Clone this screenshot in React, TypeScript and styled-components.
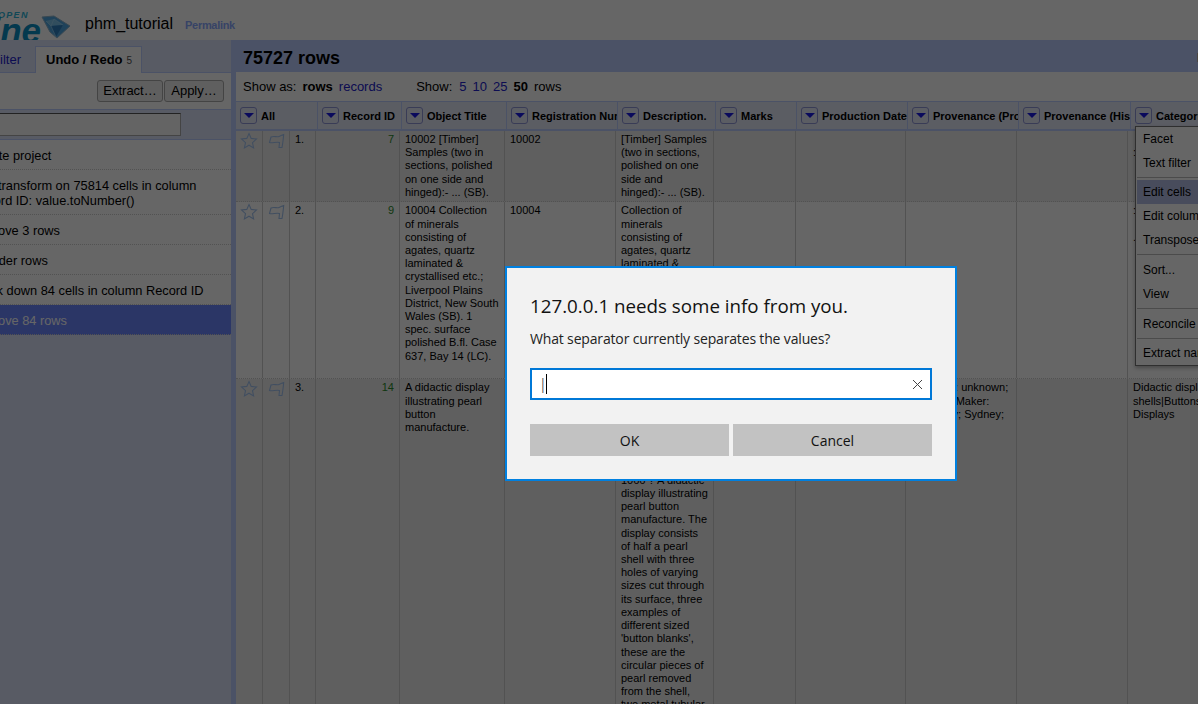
import React from "react";
import styled, { createGlobalStyle } from "styled-components";

const Global = createGlobalStyle`
  html, body { margin: 0; padding: 0; background: #fff; }
  body { font-family: "Liberation Sans", Arial, sans-serif; color: #000; }
  * { box-sizing: border-box; }
`;

const Page = styled.div`
  position: relative; width: 1198px; height: 704px; overflow: hidden;
  display: flex; flex-direction: column; background: #fff;
`;
const Header = styled.header`
  height: 40px; flex: none; display: flex; align-items: flex-start;
`;
const Logo = styled.div`display: flex; align-items: flex-start; width: 85px; flex: none;`;
const LogoWords = styled.div`
  width: 41px; height: 40px; overflow: hidden; display: flex; flex-direction: column;
  font-style: italic; font-weight: bold;
`;
const LogoOpen = styled.div`
  font-size: 9px; line-height: 8px; letter-spacing: 1.3px; color: #2fb4d8; margin: 11px 0 0 -2px;
`;
const LogoName = styled.div`
  display: flex; justify-content: flex-end; font-size: 35px; line-height: 24px; height: 24px; color: #0a8fc4; white-space: nowrap;
`;
const Diamond = styled.svg`margin: 15px 0 0 0; flex: none;`;
const ProjectName = styled.div`font-size: 16px; line-height: 20px; margin-top: 14px;`;
const Permalink = styled.a`font-size: 11px; font-weight: bold; letter-spacing: -0.3px; color: #8aa8ff; line-height: 14px; margin: 18px 0 0 12px;`;

const Main = styled.div`flex: 1; display: flex; min-height: 0;`;
const Left = styled.aside`
  width: 231px; flex: none; background: #dde3fb; display: flex; flex-direction: column; overflow: hidden;
`;
const TabBar = styled.div`
  height: 33px; flex: none; display: flex; align-items: flex-end; padding-top: 6px; border-bottom: 1px solid #bcf;
`;
const TabGhost = styled.div`
  width: 35px; flex: none; height: 26px; display: flex; justify-content: flex-end; align-items: center;
  padding-right: 14px; font-size: 13px; color: #2222cc; white-space: nowrap;
`;
const Tab = styled.div`
  width: 107px; height: 27px; background: #fff; border: 1px solid #bcf; border-bottom: none;
  margin-bottom: -1px; padding-left: 10px; font-size: 13px; font-weight: bold; line-height: 25px; white-space: nowrap;
`;
const TabCount = styled.span`font-size: 10px; font-weight: normal; color: #555; margin-left: 4px;`;
const Tools = styled.div`
  height: 36px; flex: none; background: #fff; display: flex; justify-content: flex-end; padding: 7px 7px 0 0;
`;
const ToolButton = styled.div<{ $w: number }>`
  width: ${(p) => p.$w}px; height: 22px; background: #eee; border: 1px solid #aaa; font-size: 13px;
  line-height: 20px; text-align: center; border-radius: 3px; color: #000;
  & + & { margin-left: 1px; }
`;
const SearchBand = styled.div`
  height: 31px; flex: none; background: #dde3fb; border-top: 1px solid #bcf; border-bottom: 1px solid #bcf;
  padding-top: 3px;
`;
const SearchInput = styled.div`
  width: 182px; height: 23px; margin-left: -1px; background: #fafafa; border: 1px solid #aaa;
  border-top-color: #555; border-left-color: #555;
`;
const History = styled.div`background: #fff; display: flex; flex-direction: column;`;
const HistoryRow = styled.div<{ $on?: boolean }>`
  padding: 7.5px 10px 6.5px 0; font-size: 12.8px; line-height: 15px; border-bottom: 1px dotted #ccc;
  background: ${(p) => (p.$on ? "#6c88ff" : "transparent")};
  color: ${(p) => (p.$on ? "#fff" : "#000")};
`;
const HistoryText = styled.div`margin-left: -29px; width: 245px;`;

const Right = styled.section`
  flex: 1; min-width: 0; display: flex; flex-direction: column; background: #bcf; overflow: hidden;
`;
const TitleBand = styled.div`
  height: 32px; flex: none; padding-left: 12px; display: flex; justify-content: space-between;
  font-size: 18px; font-weight: bold; line-height: 36px; white-space: nowrap;
`;
const EdgeMark = styled.span`width: 1px; overflow: hidden; font-size: 12px; font-weight: normal;`;
const Data = styled.div`
  flex: 1; margin-left: 5px; background: #fff; display: flex; flex-direction: column; min-height: 0;
`;
const Controls = styled.div`
  height: 29px; flex: none; display: flex; align-items: center; gap: 6px; padding-left: 7px; font-size: 13px;
`;
const Strong = styled.b``;
const Link = styled.a`color: #2222cc;`;
const GroupGap = styled.span`width: 22px;`;
const ControlLabel = styled.span``;
const CountLabel = styled.span`margin-right: 1px;`;

const HEAD = "82px 84px 105px 111px 98px 81px 111px 111px 112px 200px";
const COLS = "27px 27px 26px 84px 105px 111px 98px 82px 110px 111px 111px 200px";

const HeadRow = styled.div`
  display: grid; grid-template-columns: ${HEAD}; height: 30px; flex: none; background: #e4e8f8;
  border-top: 1px solid #bcf; border-bottom: 2px solid #bcf;
`;
const HeadCell = styled.div`
  display: flex; align-items: center; gap: 4px; padding-left: 4px; border-right: 1px solid #bcf;
  font-size: 11px; font-weight: bold; white-space: nowrap; overflow: hidden;
`;
const Drop = styled.span`
  width: 17px; height: 17px; flex: none; border: 1px solid #8f97d8; border-radius: 3px; display: flex;
  align-items: center; justify-content: center;
  &::after {
    content: ""; width: 0; height: 0; border-left: 5px solid transparent; border-right: 5px solid transparent;
    border-top: 5px solid #1a1ae6;
  }
`;
const Rows = styled.div`flex: 1; min-height: 0; overflow: hidden;`;
const Row = styled.div<{ $odd?: boolean }>`
  display: grid; grid-template-columns: ${COLS}; border-bottom: 1px dotted #ccc;
  background: ${(p) => (p.$odd ? "#eee" : "#fff")};
`;
const Cell = styled.div`
  padding: 2px 5px 2.4px; font-size: 11px; line-height: 13.2px; border-right: 1px solid #ccc; overflow: hidden; min-width: 0;
`;
const IconCell = styled(Cell)`padding: 1px 0 0 4px;`;
const Num = styled(Cell)`text-align: right; color: #2a8a2a; font-size: 11px;`;
const Index = styled(Cell)`font-size: 11px;`;

const Menu = styled.div`
  position: absolute; left: 1135px; top: 126px; width: 130px; background: #fff; border: 1px solid #777; border-right: none;
  box-shadow: 0 2px 4px rgba(0,0,0,.3);
`;
const MenuItem = styled.div<{ $on?: boolean }>`
  height: 24px; line-height: 24px; font-size: 12px; padding-left: 6px; white-space: nowrap; overflow: hidden;
  margin-left: 1px;
  background: ${(p) => (p.$on ? "#b4bde6" : "transparent")};
`;
const MenuRule = styled.div<{ $wide?: boolean }>`
  height: 1px; background: #bbb; margin: 2px 0 ${(p) => (p.$wide ? 3 : 2)}px 1px;
`;

const Scrim = styled.div`position: absolute; inset: 0; background: rgba(0,0,0,.6);`;
const Dialog = styled.div`
  position: absolute; left: 505px; top: 266px; width: 452px; height: 215px; background: #f2f2f2;
  border: 2px solid #0080e0; padding: 25px 23px 0 23px; font-family: "Open Sans", "Noto Sans", sans-serif; color: #111;
`;
const DialogTitle = styled.div`font-size: 18.75px; line-height: 26px; white-space: nowrap;`;
const DialogText = styled.div`font-size: 14px; letter-spacing: -0.16px; line-height: 20px; margin-top: 10px; white-space: nowrap; color: #222;`;
const Field = styled.div`
  margin-top: 19px; height: 32px; background: #fff; border: 2px solid #0078d7; display: flex; align-items: center;
  padding: 0 7px 0 7px;
`;
const Typed = styled.span`font-size: 14px; color: #555; line-height: 20px;`;
const Caret = styled.span`width: 1px; height: 20px; background: #000; margin-left: -1px;`;
const Clear = styled.svg`margin-left: auto; flex: none;`;
const Buttons = styled.div`display: flex; gap: 4px; margin-top: 24px;`;
const DialogButton = styled.div`
  width: 199px; height: 32px; background: #c2c2c2; text-align: center; font-size: 14px; line-height: 33px; color: #111;
`;

const Star = () => (
  <svg width="18" height="18" viewBox="0 0 18 18" fill="none" stroke="#a3c4f0" strokeWidth="1.1">
    <path d="M9 1.5l2.2 4.9 5.3.6-4 3.6 1.1 5.3L9 13.2l-4.6 2.7 1.1-5.3-4-3.6 5.300-.6z" />
  </svg>
);
const Flag = () => (
  <svg width="18" height="18" viewBox="0 0 18 18" fill="none" stroke="#a3c4f0" strokeWidth="1.1">
    <path d="M2.500 10.500L4 5C7 3.500 10 5.500 12 4.500C14 3.500 15 3 16.700 2.500C16.200 7 16 11 15 15.500L12 15.500L12.500 10.500C9.500 9.500 5 11.500 2.500 10.500Z" />
  </svg>
);

const headers = ["All", "Record ID", "Object Title", "Registration Number", "Description.", "Marks", "Production Date", "Provenance (Production)", "Provenance (History)", "Categories"];

type R = { n: string; id: string; title: string; reg: string; desc: React.ReactNode; prov?: React.ReactNode; cat: React.ReactNode; odd?: boolean };
const rows: R[] = [
  { n: "1.", id: "7", title: "10002 [Timber] Samples (two in sections, polished on one side and hinged):- ... (SB).", reg: "10002", desc: "[Timber] Samples (two in sections, polished on one side and hinged):- ... (SB).", cat: <><br />:Timber</>, odd: true },
  { n: "2.", id: "9", title: "10004 Collection of minerals consisting of agates, quartz laminated & crystallised etc.; Liverpool Plains District, New South Wales (SB). 1 spec. surface polished B.fl. Case 637, Bay 14 (LC).", reg: "10004", desc: "Collection of minerals consisting of agates, quartz laminated & crystallised etc.; Liverpool Plains District, New South Wales (SB). 1 spec. surface polished B.fl. Case 637, Bay 14 (LC).", cat: <>:Minerals<br /><br />.Quartz</> },
  {
    n: "3.", id: "14", title: "A didactic display illustrating pearl button manufacture.", reg: "10005",
    desc: <>A didactic display<br />illustrating pearl<br />button<br />manufacture.<br />Statement: Pearl<br />button display<br />Number:<br />1066 ? A didactic display illustrating pearl button manufacture. The display consists of half a pearl shell with three holes of varying sizes cut through its surface, three examples of different sized 'button blanks', these are the circular pieces of pearl removed from the shell, two metal tubular</>,
    prov: <>Designer: unknown;<br />Possible Maker:<br />Company; Sydney;</>,
    cat: <>Didactic display|Pearl<br />shells|Buttons|<br />Displays</>, odd: true,
  },
];

export default function App() {
  return (
    <>
      <Global />
      <Page>
        <Header>
          <Logo>
            <LogoWords>
              <LogoOpen>OPEN</LogoOpen>
              <LogoName>Refine</LogoName>
            </LogoWords>
            <Diamond width="30" height="24" viewBox="0 0 30 24">
              <path d="M1 2l12-1 16 10-13 12L9 17z" fill="#4fa6e0" stroke="#8fb4cc" strokeWidth="1" />
              <path d="M5 6l8-2 9 6-12 1z" fill="#7cc2ec" />
              <path d="M10 11l12-1-7 12z" fill="#2f80c0" />
              <path d="M5 6l5 5 5 11M13 4l-3 7M22 10l-9-6" fill="none" stroke="#a4d8f4" strokeWidth=".6" />
            </Diamond>
          </Logo>
          <ProjectName>phm_tutorial</ProjectName>
          <Permalink>Permalink</Permalink>
        </Header>
        <Main>
          <Left>
            <TabBar>
              <TabGhost>Filter</TabGhost>
              <Tab>Undo / Redo<TabCount>5</TabCount></Tab>
            </TabBar>
            <Tools>
              <ToolButton $w={66}>Extract…</ToolButton>
              <ToolButton $w={60}>Apply…</ToolButton>
            </Tools>
            <SearchBand><SearchInput /></SearchBand>
            <History>
              <HistoryRow><HistoryText>Create project</HistoryText></HistoryRow>
              <HistoryRow><HistoryText>Text transform on 75814 cells in column Record ID: value.toNumber()</HistoryText></HistoryRow>
              <HistoryRow><HistoryText>Remove 3 rows</HistoryText></HistoryRow>
              <HistoryRow><HistoryText>Reorder rows</HistoryText></HistoryRow>
              <HistoryRow><HistoryText>Blank down 84 cells in column Record ID</HistoryText></HistoryRow>
              <HistoryRow $on><HistoryText>Remove 84 rows</HistoryText></HistoryRow>
            </History>
          </Left>
          <Right>
            <TitleBand>75727 rows<EdgeMark>Extensions</EdgeMark></TitleBand>
            <Data>
              <Controls>
                <ControlLabel>Show as:</ControlLabel>
                <Strong>rows</Strong>
                <Link>records</Link>
                <GroupGap />
                <CountLabel>Show:</CountLabel>
                <Link>5</Link>
                <Link>10</Link>
                <Link>25</Link>
                <Strong>50</Strong>
                <span>rows</span>
              </Controls>
              <HeadRow>
                {headers.map((h) => (
                  <HeadCell key={h}><Drop />{h}</HeadCell>
                ))}
              </HeadRow>
              <Rows>
                {rows.map((r) => (
                  <Row key={r.n} $odd={r.odd}>
                    <IconCell><Star /></IconCell>
                    <IconCell><Flag /></IconCell>
                    <Index>{r.n}</Index>
                    <Num>{r.id}</Num>
                    <Cell>{r.title}</Cell>
                    <Cell>{r.reg}</Cell>
                    <Cell>{r.desc}</Cell>
                    <Cell />
                    <Cell />
                    <Cell>{r.prov}</Cell>
                    <Cell />
                    <Cell>{r.cat}</Cell>
                  </Row>
                ))}
              </Rows>
            </Data>
          </Right>
        </Main>
        <Menu>
          <MenuItem>Facet</MenuItem>
          <MenuItem>Text filter</MenuItem>
          <MenuRule />
          <MenuItem $on>Edit cells</MenuItem>
          <MenuItem>Edit column</MenuItem>
          <MenuItem>Transpose</MenuItem>
          <MenuRule $wide />
          <MenuItem>Sort...</MenuItem>
          <MenuItem>View</MenuItem>
          <MenuRule $wide />
          <MenuItem>Reconcile</MenuItem>
          <MenuRule />
          <MenuItem>Extract named</MenuItem>
        </Menu>
        <Scrim />
        <Dialog>
          <DialogTitle>127.0.0.1 needs some info from you.</DialogTitle>
          <DialogText>What separator currently separates the values?</DialogText>
          <Field>
            <Typed>|</Typed>
            <Caret />
            <Clear width="11" height="11" viewBox="0 0 11 11" stroke="#444" strokeWidth="1" fill="none">
              <path d="M1 1l9 9M10 1l-9 9" />
            </Clear>
          </Field>
          <Buttons>
            <DialogButton>OK</DialogButton>
            <DialogButton>Cancel</DialogButton>
          </Buttons>
        </Dialog>
      </Page>
    </>
  );
}
